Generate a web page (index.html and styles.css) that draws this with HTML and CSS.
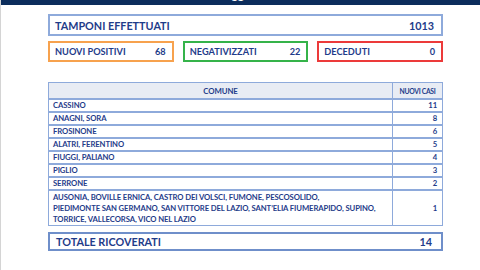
FILE: index.html
```html
<!DOCTYPE html>
<html lang="it">
<head>
<meta charset="utf-8">
<title>Tamponi</title>
<link rel="stylesheet" href="styles.css">
</head>
<body>
<div class="page">
  <div class="topbar"><span class="topbar-text">Aggiornamento</span></div>
  <div class="content">
    <div class="box box-main"><span>TAMPONI EFFETTUATI</span><span>1013</span></div>
    <div class="stats">
      <div class="box stat stat-orange"><span>NUOVI POSITIVI</span><span>68</span></div>
      <div class="box stat stat-green"><span>NEGATIVIZZATI</span><span>22</span></div>
      <div class="box stat stat-red"><span>DECEDUTI</span><span>0</span></div>
    </div>
    <table class="cases">
      <thead>
        <tr><th class="col-name">COMUNE</th><th class="col-num">NUOVI CASI</th></tr>
      </thead>
      <tbody>
        <tr><td>CASSINO</td><td class="num">11</td></tr>
        <tr><td>ANAGNI, SORA</td><td class="num">8</td></tr>
        <tr><td>FROSINONE</td><td class="num">6</td></tr>
        <tr><td>ALATRI, FERENTINO</td><td class="num">5</td></tr>
        <tr><td>FIUGGI, PALIANO</td><td class="num">4</td></tr>
        <tr><td>PIGLIO</td><td class="num">3</td></tr>
        <tr><td>SERRONE</td><td class="num">2</td></tr>
        <tr class="multi"><td>AUSONIA, BOVILLE ERNICA, CASTRO DEI VOLSCI, FUMONE, PESCOSOLIDO,<br>PIEDIMONTE SAN GERMANO, SAN VITTORE DEL LAZIO, SANT’ELIA FIUMERAPIDO, SUPINO,<br>TORRICE, VALLECORSA, VICO NEL LAZIO</td><td class="num">1</td></tr>
      </tbody>
    </table>
    <div class="box box-total"><span>TOTALE RICOVERATI</span><span>14</span></div>
  </div>
</div>
</body>
</html>
```
FILE: styles.css
```css
html, body {
  margin: 0;
  padding: 0;
  background: #ffffff;
}
.page {
  width: 480px;
  height: 270px;
  box-sizing: border-box;
  border-left: 1px solid #d4d4d4;
  overflow: hidden;
  font-family: Lato, "Liberation Sans", sans-serif;
  font-weight: 700;
  color: #1f3c8a;
}
.topbar {
  height: 5px;
  background: #0c2d5c;
  overflow: hidden;
  display: flex;
  justify-content: center;
}
.topbar-text {
  color: #ffffff;
  font-size: 12px;
  line-height: 12px;
  margin-top: -11px;
  padding-left: 48px;
}
.content {
  padding: 9px 37px 0 47px;
  display: flex;
  flex-direction: column;
}
.box {
  display: flex;
  justify-content: space-between;
  align-items: center;
  box-sizing: border-box;
}
.box-main {
  height: 22px;
  border: 2px solid #8eaadb;
  padding: 0 7px 0 5px;
  font-size: 10.8px;
}
.stats {
  display: flex;
  gap: 9px;
  margin-top: 5px;
}
.stat {
  flex: 1;
  height: 21px;
  border: 2px solid;
  padding: 0 6px 0 5px;
  font-size: 9.2px;
}
.stat-orange { border-color: #f7a24e; }
.stat-green { border-color: #35b34a; }
.stat-red { border-color: #ec3a3a; }
.cases {
  margin-top: 20px;
  width: 100%;
  border-collapse: collapse;
  border: 1px solid #8eaadb;
  font-size: 7.7px;
  letter-spacing: -0.1px;
}
.cases th {
  background: #e8ecf4;
  height: 15px;
  padding: 0;
  font-size: 7.8px;
  border: 1px solid #8eaadb;
  border-bottom-width: 2px;
}
.cases th.col-num {
  width: 49px;
  font-size: 6.8px;
  letter-spacing: -0.3px;
}
.cases td {
  height: 11px;
  padding: 0 4px;
  border: 1px solid #8eaadb;
  border-bottom-width: 2px;
  line-height: 11px;
  text-align: left;
}
.cases td.num {
  text-align: right;
  padding-right: 5px;
}
.cases tr.multi td {
  height: 34px;
  line-height: 11px;
  border-bottom-width: 1px;
}
.box-total {
  margin-top: 6px;
  height: 19px;
  border: 2px solid #6f8fca;
  padding: 0 9px 0 6px;
  font-size: 10.8px;
}
```
